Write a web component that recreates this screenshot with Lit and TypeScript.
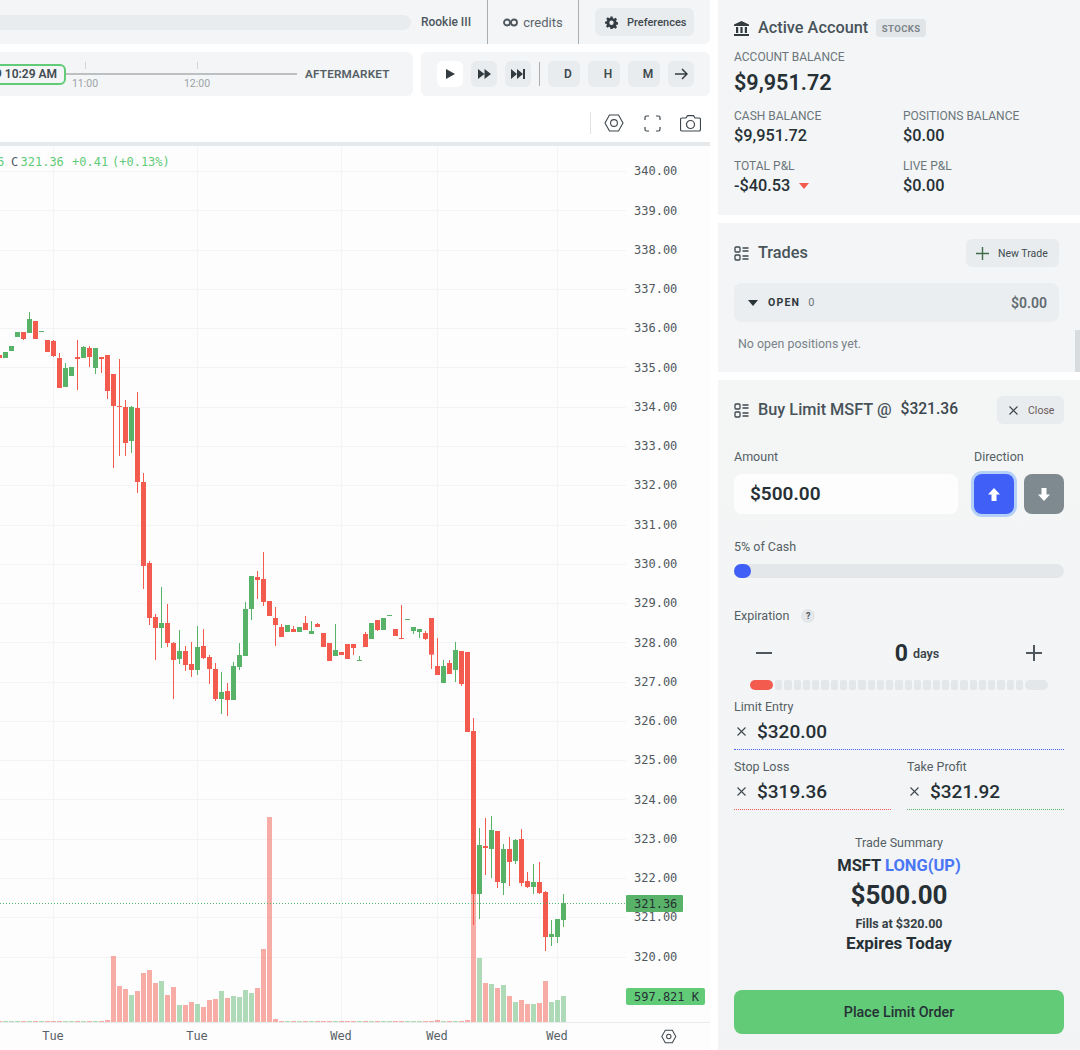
import { LitElement, html, css, svg } from "lit";
import { customElement } from "lit/decorators.js";

type C = [number, "r" | "g", number, number, number?, number?];
const A: C[] = [[-1,"r",165,174],[0,"g",156,174],[1,"g",138,153],[2,"g",96,111],[3,"r",96,117,96,120],[4,"g",57,99,36,99],[5,"r",63,117],[6,"g",93,96],[7,"r",120,156],[8,"r",123,168,120,171],[9,"r",174,264,159,264],[10,"g",204,261,189,261],[11,"g",201,228],[12,"r",171,177,120,270],[13,"g",141,174,138,174],[14,"r",144,171,138,201],[15,"g",144,204,144,222],[16,"r",171,177,171,219],[17,"r",165,273,165,297],[18,"r",222,318,222,504],[19,"r",318,321,177,468],[20,"r",321,429,300,468],[21,"g",321,423,318,459],[22,"r",324,546,276,579],[23,"r",546,798,519,867],[24,"r",789,954,783,975],[25,"r",951,984,942,1080],[26,"g",969,984,861,1044],[27,"r",969,1029,912,1041],[28,"r",1029,1080,1026,1197],[29,"g",1053,1077,990,1092],[30,"r",1053,1095,1038,1113],[31,"r",1092,1110,1026,1131],[32,"g",1041,1110,978,1125],[33,"r",1038,1074,987,1077],[34,"r",1071,1107,1065,1152],[35,"r",1107,1197,1089,1203],[36,"g",1176,1197,1116,1242],[37,"r",1173,1200,1149,1248],[38,"g",1098,1200,1086,1200],[39,"g",1065,1101,1029,1110],[40,"g",927,1068,906,1068],[41,"g",828,927,828,960],[42,"r",831,840,813,897],[43,"r",837,906,756,918]];
const B: C[] = [[44,"r",183,228],[45,"r",234,255,201,318],[46,"r",261,291,252,291],[47,"g",255,276],[48,"r",267,276,258,276],[49,"g",261,276],[50,"r",249,270,228,270],[51,"g",273,282,243,282],[52,"r",252,261,249,261],[53,"r",279,321],[54,"r",309,363],[55,"g",330,348,252,348],[56,"r",336,345],[57,"r",312,357],[58,"r",312,324,312,345],[59,"g",360,363,348,363],[60,"r",282,321,276,321],[61,"g",249,297],[62,"r",240,270,240,273],[63,"g",234,270],[64,"g",225,228],[65,"r",267,288],[66,"r",294,297,195,297],[67,"g",237,240],[68,"g",261,273,261,282],[69,"g",267,276,267,294],[70,"r",279,297,273,300]];
const D: C[] = [[71,"r",-66,44,-66,87],[72,"r",78,105,-6,105],[73,"g",78,129,60,129],[74,"r",69,102,60,102],[75,"g",30,90,6,126],[76,"r",33,132,33,138],[77,"r",36,276],[78,"r",273,762,234,855],[79,"g",615,762,564,837],[80,"r",618,624,534,705],[81,"g",570,627,528,714],[82,"r",573,726,573,744],[83,"g",627,729,612,765],[84,"r",627,666,591,738],[85,"g",600,663,597,672],[86,"r",597,729,567,738],[87,"r",723,741,696,744],[88,"g",726,741,672,762],[89,"r",726,759,666,762],[90,"r",756,891,753,933],[91,"g",882,891,840,918],[92,"g",837,891,837,909],[93,"g",789,840,762,861]];

const CHART_TOP = 146;
const shift = (list: C[], origin: number) =>
  list.map(([k, c, t, b, wt, wb]) => ({
    k, c,
    t: origin + t / 3, b: origin + b / 3,
    wt: origin + (wt ?? t) / 3, wb: origin + (wb ?? b) / 3,
  }));
const candles = [...shift(A, 300), ...shift(B, 540), ...shift(D, 640)];
const colorOf = new Map(candles.map((c) => [c.k, c.c]));

const volTop: Record<number, number> = {
  17: 1020, 18: 956, 19: 986, 20: 989, 21: 995, 22: 991, 23: 973, 24: 970, 25: 983, 26: 981, 27: 995, 28: 987,
  29: 1005, 30: 1005, 31: 1002, 32: 1004, 33: 1007, 34: 1000, 35: 999, 36: 991, 37: 998, 38: 996, 39: 997, 40: 990,
  41: 993, 42: 988, 43: 949, 44: 817, 45: 1019, 72: 1020, 77: 1020, 78: 894, 79: 958, 80: 983, 81: 984, 82: 988,
  83: 985, 84: 996, 85: 1002, 86: 1000, 87: 1004, 88: 1004, 89: 1003, 90: 981, 91: 1002, 92: 1000, 93: 996,
};
const RED = "#f45b4f", GREEN = "#58b368";
const gridY = (p: number) => 171.6 + (340 - p) * 39.27;
const prices = Array.from({ length: 21 }, (_, i) => 340 - i);
const verticals = [53, 197, 341, 437, 557];
const xLabels: [number, string][] = [[53, "Tue"], [197, "Tue"], [341, "Wed"], [437, "Wed"], [557, "Wed"]];

const hex = () => html`<svg width="20" height="18" viewBox="0 0 20 18" fill="none" stroke="#3d464c" stroke-width="1.1"><path d="M5.5 1h9L19 9l-4.5 8h-9L1 9z"/><circle cx="10" cy="9" r="3.4"/></svg>`;
const listIc = html`<svg width="15" height="15" viewBox="0 0 15 15" fill="none" stroke="#3d474d" stroke-width="1.3"><rect x="1" y="1" width="5" height="5" rx="1"/><rect x="1" y="9" width="5" height="5" rx="1"/><path d="M8.5 2h6M8.5 5h6M8.5 10h6M8.5 13h6"/></svg>`;
const xIc = html`<svg width="9" height="9" viewBox="0 0 9 9" stroke="#3d474d" stroke-width="1.1"><path d="M.5.5l8 8M8.5.5l-8 8"/></svg>`;

@customElement("app-root")
export class AppRoot extends LitElement {
  static styles = css`
    :host { display: block; width: 1080px; height: 1050px; overflow: hidden; background: #fff; font-family: "Roboto", "Liberation Sans", sans-serif; color: #2a3338; }
    .page { display: grid; grid-template-columns: 710px 362px; gap: 8px; height: 1050px; }
    .left { display: flex; flex-direction: column; min-width: 0; overflow: hidden; background: #fff; }
    .top { display: flex; align-items: center; height: 44px; background: #f3f5f6; border-radius: 0 0 6px 0; flex: none; }
    .prog { flex: 1; height: 15px; margin-left: -20px; background: #e9ecee; border-radius: 8px; }
    .rank { width: 76px; box-sizing: border-box; padding-right: 6px; text-align: center; font-size: 12px; font-weight: 500; color: #4d575d; white-space: nowrap; }
    .cell { height: 44px; border-left: 1px solid #a9aeb1; display: flex; align-items: center; justify-content: center; box-sizing: border-box; }
    .credits { width: 91px; gap: 5px; font-size: 13px; color: #5a646a; }
    .prefcell { width: 132px; padding-left: 16px; justify-content: flex-start; }
    .pref { width: 99px; height: 28px; background: #e9ecee; border-radius: 6px; display: flex; align-items: center; gap: 9px; padding-left: 10px; box-sizing: border-box; font-size: 11px; font-weight: 500; color: #3f484e; white-space: nowrap; }
    .row2 { display: flex; gap: 8px; margin-top: 8px; height: 44px; flex: none; }
    .tl { width: 413px; background: #f3f5f6; border-radius: 0 6px 6px 0; display: flex; align-items: center; }
    .pill { margin-left: -30px; width: 96px; height: 21px; box-sizing: border-box; border: 2px solid #62cb78; border-radius: 6px; display: flex; align-items: center; justify-content: flex-end; padding-right: 7px; font-size: 12px; font-weight: 600; color: #414b51; white-space: nowrap; flex: none; overflow: hidden; }
    .line { position: relative; flex: none; width: 231px; height: 2px; background: #bcc0c3; }
    .tick { position: absolute; top: -11px; width: 1px; height: 7px; background: #cfd3d5; }
    .tlab { position: absolute; top: 4px; transform: translateX(-50%); font-size: 10.5px; color: #9da3a7; }
    .after { margin-left: 8px; font-size: 11.7px; font-weight: 600; color: #555f65; letter-spacing: .2px; white-space: nowrap; }
    .ctl { flex: 1; background: #f3f5f6; border-radius: 6px; display: flex; align-items: center; padding-left: 16px; gap: 8px; }
    .btn { width: 26px; height: 26px; border-radius: 6px; background: #e9ecee; display: flex; align-items: center; justify-content: center; font-size: 12px; font-weight: 600; color: #3f484e; }
    .btn.white { background: #fff; }
    .btn.w { width: 32px; box-sizing: border-box; padding-left: 8px; }
    .sep { width: 1px; height: 24px; background: #a9aeb1; }
    .tools { height: 46px; flex: none; display: flex; align-items: center; justify-content: flex-end; padding-right: 9px; padding-top: 8px; box-sizing: border-box; }
    .vsep { width: 1px; height: 22px; background: #dfe2e4; margin-right: 13px; }
    .t1 { margin-right: 20px; display: flex; }
    .t2 { margin-right: 19px; display: flex; }
    .band { height: 4px; background: #e6e9ec; flex: none; }
    .chart { display: block; flex: none; background: #fdfdfd; }
    .chart text { font-family: "DejaVu Sans Mono", monospace; font-size: 12px; }
    .right { display: flex; flex-direction: column; gap: 8px; position: relative; min-width: 0; }
    .card { background: #f3f5f6; box-sizing: border-box; padding: 0 16px; flex: none; }
    .acct { height: 215px; padding-top: 18px; }
    .trades { height: 149px; padding-top: 16px; }
    .form { flex: 1; padding-top: 16px; background: linear-gradient(#f4f6f6, #f1f3f5); }
    .scroll { position: absolute; right: 0; top: 330px; width: 5px; height: 42px; background: #d9dcde; }
    .head { display: flex; align-items: center; height: 20px; }
    .head > svg { flex: none; margin-right: 9px; }
    .title { font-size: 16.3px; font-weight: 500; color: #48535a; padding-bottom: 2px; white-space: nowrap; }
    .tag { margin-left: 8px; width: 50px; height: 18px; background: #e2e5e8; border-radius: 4px; font-size: 9.5px; font-weight: 700; letter-spacing: .4px; color: #7b848a; display: flex; align-items: center; justify-content: center; }
    .lbl { font-size: 12px; color: #6c757b; line-height: 16px; }
    .big { font-size: 21.6px; font-weight: 600; line-height: 30px; color: #263035; margin-top: 3px; }
    .grid2 { display: grid; grid-template-columns: 169px 1fr; row-gap: 10px; margin-top: 10px; }
    .val { font-size: 16.3px; font-weight: 500; line-height: 24px; color: #263035; display: flex; align-items: center; gap: 9px; }
    .down { width: 0; height: 0; border: 5px solid transparent; border-top: 6px solid #f45b4f; border-bottom: 0; }
    .between { justify-content: space-between; }
    .action { height: 28px; background: #e9ecee; border-radius: 6px; display: flex; align-items: center; font-size: 10.5px; box-sizing: border-box; color: #414b51; white-space: nowrap; }
    .newt { width: 93px; padding-left: 10px; gap: 9px; margin-right: 5px; }
    .closeb { width: 67px; padding-left: 12px; gap: 10px; color: #6b5a5c; }
    .open { margin-top: 16px; height: 39px; background: #ebeef0; border-radius: 8px; display: flex; align-items: center; padding: 0 12px 0 14px; font-size: 10.5px; color: #2f383d; }
    .caret { width: 0; height: 0; border: 5px solid transparent; border-top: 6px solid #2a3338; border-bottom: 0; margin-right: 10px; }
    .ob { font-weight: 700; letter-spacing: 1.2px; }
    .oc { margin-left: 8px; color: #6c757b; font-size: 11px; }
    .oamt { margin-left: auto; font-size: 14px; font-weight: 600; color: #626c72; }
    .none { margin: 14px 0 0 4px; font-size: 12.4px; color: #7a8389; }
    .price { margin-left: 9px; color: #3d474d; font-size: 15.6px; }
    .f-lbl { font-size: 12.5px; line-height: 16px; color: #555f65; }
    .amtrow { display: grid; grid-template-columns: 240px 1fr; margin-top: 25px; }
    .input { margin-top: 9px; width: 224px; height: 40px; box-sizing: border-box; background: #fdfdfd; border-radius: 8px; padding: 0 0 2px 16px; display: flex; align-items: center; font-size: 19px; font-weight: 600; color: #263035; }
    .dirs { margin-top: 9px; display: flex; gap: 10px; }
    .dir { width: 40px; height: 40px; border-radius: 8px; background: #7f8a90; display: flex; align-items: center; justify-content: center; }
    .dir.on { background: #3f5ff7; box-shadow: 0 0 0 3px #b4d0f7; }
    .pct { margin-top: 25px; }
    .slider { margin-top: 9px; height: 14px; border-radius: 7px; background: #e4e7ea; }
    .knob { width: 17px; height: 14px; border-radius: 7px; background: #3f5ff7; }
    .exp { margin-top: 30px; display: flex; align-items: center; gap: 12px; }
    .q { width: 14px; height: 14px; border-radius: 50%; background: #e4e7ea; font-size: 9px; font-weight: 700; color: #4d575d; display: flex; align-items: center; justify-content: center; }
    .days { margin-top: 17px; height: 24px; display: flex; align-items: center; justify-content: space-between; padding: 0 22px; }
    .dnum { display: flex; align-items: center; gap: 5px; font-size: 12.5px; font-weight: 600; color: #3a4349; margin-left: 36px; }
    .dnum b { font-size: 23px; font-weight: 700; color: #263035; }
    .steps { margin: 15px 16px 0; height: 10px; display: flex; gap: 2px; }
    .s { flex: 1; background: #e4e7ea; border-radius: 2px; }
    .s.first { flex: none; width: 23px; background: #f45b4f; border-radius: 5px; }
    .s.last { flex: none; width: 23px; border-radius: 5px; }
    .field { margin-top: 9px; }
    .fv { height: 35px; box-sizing: border-box; display: flex; align-items: center; gap: 11px; padding: 0 0 1px 3px; font-size: 19px; font-weight: 500; color: #263035; border-bottom: 1px dotted; }
    .blue { border-color: #3f5ff7; }
    .red { border-color: #f45b4f; }
    .green { border-color: #58b368; }
    .fields2 { display: grid; grid-template-columns: 157px 157px; justify-content: space-between; }
    .sum { margin-top: 25px; display: flex; flex-direction: column; align-items: center; color: #263035; }
    .s1 { font-size: 12.5px; line-height: 16px; color: #555f65; }
    .s2 { font-size: 16.5px; line-height: 20px; font-weight: 700; margin-top: 5px; }
    .s2 span { color: #4a76f5; }
    .s3 { font-size: 26px; line-height: 30px; font-weight: 700; margin-top: 4px; }
    .s4 { font-size: 12.5px; line-height: 16px; font-weight: 700; margin-top: 6px; color: #363f44; }
    .s5 { font-size: 17px; line-height: 20px; font-weight: 700; margin-top: 1px; }
    .place { margin-top: 37px; height: 44px; border-radius: 8px; background: #62cb78; display: flex; align-items: center; justify-content: center; font-size: 14.3px; font-weight: 500; color: #263035; }
  `;

  private chart() {
    const T = CHART_TOP;
    return html`<svg class="chart" width="710" height="904" viewBox="0 ${T} 710 904">
      ${prices.map((p) => svg`<rect x="0" y=${Math.floor(gridY(p))} width="626" height="1" fill="#f3f4f5"/>`)}
      ${verticals.map((x) => svg`<rect x=${x} y=${T} width="1" height=${1022 - T} fill="#f3f4f5"/>`)}
      ${Array.from({ length: 95 }, (_, i) => {
        const k = i - 1;
        const top = volTop[k] ?? 1021;
        const c = colorOf.get(k) ?? "r";
        return svg`<rect x=${3 + 6 * k} y=${top} width="5" height=${1022 - top} fill=${c === "r" ? RED : GREEN} opacity=${c === "r" ? 0.5 : 0.47}/>`;
      })}
      ${candles.map((c) => {
        const col = c.c === "r" ? RED : GREEN;
        return svg`<rect x=${5 + 6 * c.k} y=${c.wt} width="1" height=${c.wb - c.wt} fill=${col}/>
          <rect x=${3 + 6 * c.k} y=${c.t} width="5" height=${c.b - c.t} fill=${col}/>`;
      })}
      <line x1="0" x2="626" y1="903.5" y2="903.5" stroke=${GREEN} stroke-dasharray="1 2"/>
      <rect x="0" y="1022" width="710" height="1" fill="#e8ebee"/>
      ${prices.map((p) => svg`<text x="634" y=${gridY(p) + 3.7} fill="#50585e">${p.toFixed(2)}</text>`)}
      <rect x="626" y="895" width="57" height="17" rx="1" fill=${GREEN}/>
      <text x="634" y="907.5" fill="#263035">321.36</text>
      <rect x="626" y="988" width="79" height="17" rx="2" fill="#62cb78"/>
      <text x="634" y="1000.5" fill="#263035">597.821 K</text>
      ${xLabels.map(([x, t]) => svg`<text x=${x} y="1040" text-anchor="middle" fill="#596167">${t}</text>`)}
      <text x="-3" y="166" fill="#62cb78">6</text>
      <text x="11" y="166" fill="#50585e">C</text>
      <text x="20.5" y="166" fill="#62cb78">321.36</text>
      <text x="72" y="166" fill="#62cb78">+0.41</text>
      <text x="112" y="166" fill="#62cb78">(+0.13%)</text>
      <g transform="translate(661 1029.5) scale(.78)" fill="none" stroke="#3d464c" stroke-width="1.3">
        <path d="M5.5 1h9L19 9l-4.5 8h-9L1 9z"/><circle cx="10" cy="9" r="2.8"/>
      </g>
    </svg>`;
  }

  render() {
    const segs = Array.from({ length: 27 });
    return html`<div class="page">
      <div class="left">
        <div class="top">
          <div class="prog"></div>
          <div class="rank">Rookie III</div>
          <div class="cell credits">
            <svg width="15" height="9" viewBox="0 0 15 9" fill="none" stroke="#4d575d" stroke-width="1.8"><circle cx="4" cy="4.5" r="3"/><circle cx="11" cy="4.5" r="3"/></svg>
            <span>credits</span>
          </div>
          <div class="cell prefcell">
            <div class="pref">
              <svg width="13" height="13" viewBox="0 0 24 24" fill="#333c42"><path fill-rule="evenodd" d="M10 1h4l.6 3.200 2 .9L19.400 3.300l2.800 2.800-1.800 2.800.9 2 3.200.6v4l-3.200.6-.9 2 1.800 2.800-2.800 2.800-2.800-1.800-2 .9L14 24h-4l-.6-3.200-2-.9-2.800 1.800-2.800-2.800 1.800-2.800-.9-2L0 14.500v-4l3.200-.6.9-2L2.300 5.100 5.100 2.300l2.800 1.800 2-.9zM12 8.500a4 4 0 1 0 0 8 4 4 0 0 0 0-8z"/></svg>
              <span>Preferences</span>
            </div>
          </div>
        </div>
        <div class="row2">
          <div class="tl">
            <div class="pill">9 10:29 AM</div>
            <div class="line">
              <div class="tick" style="left:19px"></div>
              <div class="tick" style="left:131px"></div>
              <div class="tlab" style="left:19px">11:00</div>
              <div class="tlab" style="left:131px">12:00</div>
            </div>
            <div class="after">AFTERMARKET</div>
          </div>
          <div class="ctl">
            <div class="btn white"><svg width="9" height="10" viewBox="0 0 9 10" fill="#323b40"><path d="M0 0l9 5-9 5z"/></svg></div>
            <div class="btn"><svg width="13" height="10" viewBox="0 0 13 10" fill="#323b40"><path d="M0 0l6.500 5L0 10zM6.500 0L13 5l-6.500 5z"/></svg></div>
            <div class="btn"><svg width="14" height="10" viewBox="0 0 14 10" fill="#323b40"><path d="M0 0l6 5-6 5zM6 0l6 5-6 5zM12 0h2v10h-2z"/></svg></div>
            <div class="sep"></div>
            <div class="btn w">D</div>
            <div class="btn w">H</div>
            <div class="btn w">M</div>
            <div class="btn"><svg width="13" height="12" viewBox="0 0 13 12" fill="none" stroke="#323b40" stroke-width="1.5"><path d="M0 6h12M7 1l5 5-5 5"/></svg></div>
          </div>
        </div>
        <div class="tools">
          <div class="vsep"></div>
          <div class="t1">${hex()}</div>
          <div class="t2"><svg width="17" height="17" viewBox="0 0 17 17" fill="none" stroke="#3d464c" stroke-width="1.2"><path d="M1 5V2.500A1.500 1.500 0 0 1 2.500 1H5M12 1h2.500A1.500 1.500 0 0 1 16 2.500V5M16 12v2.500a1.500 1.500 0 0 1-1.500 1.500H12M5 16H2.500A1.500 1.500 0 0 1 1 14.500V12"/></svg></div>
          <svg width="21" height="17" viewBox="0 0 21 17" fill="none" stroke="#3d464c" stroke-width="1.2"><path d="M2 3h4l1.500-2.300h6L15 3h4a1.500 1.500 0 0 1 1.500 1.500v10A1.500 1.500 0 0 1 19 16H2a1.500 1.500 0 0 1-1.500-1.500v-10A1.500 1.500 0 0 1 2 3z"/><circle cx="10.5" cy="9.5" r="4"/></svg>
        </div>
        <div class="band"></div>
        ${this.chart()}
      </div>
      <div class="right">
        <div class="card acct">
          <div class="head">
            <svg width="15" height="15" viewBox="0 0 15 15" fill="#323b40"><path d="M7.500 0L15 3.500V5H0V3.500zM2 6h2.200v6H2zM6.400 6h2.200v6H6.400zM10.800 6H13v6h-2.200zM0 13h15v2H0z"/></svg>
            <span class="title">Active Account</span>
            <span class="tag">STOCKS</span>
          </div>
          <div class="lbl" style="margin-top:11px">ACCOUNT BALANCE</div>
          <div class="big">$9,951.72</div>
          <div class="grid2">
            <div><div class="lbl">CASH BALANCE</div><div class="val">$9,951.72</div></div>
            <div><div class="lbl">POSITIONS BALANCE</div><div class="val">$0.00</div></div>
            <div><div class="lbl">TOTAL P&L</div><div class="val">-$40.53 <span class="down"></span></div></div>
            <div><div class="lbl">LIVE P&L</div><div class="val">$0.00</div></div>
          </div>
        </div>
        <div class="card trades">
          <div class="head between" style="height:28px">
            <div class="head">${listIc}<span class="title">Trades</span></div>
            <div class="action newt">
              <svg width="13" height="13" viewBox="0 0 13 13" stroke="#3f6b4c" stroke-width="1.4"><path d="M6.500 0v13M0 6.500h13"/></svg>
              <span>New Trade</span>
            </div>
          </div>
          <div class="open" style="margin-right:5px">
            <span class="caret"></span><span class="ob">OPEN</span><span class="oc">0</span><span class="oamt">$0.00</span>
          </div>
          <div class="none">No open positions yet.</div>
        </div>
        <div class="card form">
          <div class="head between" style="height:28px">
            <div class="head">${listIc}<span class="title">Buy Limit MSFT @</span><span class="title price">$321.36</span></div>
            <div class="action closeb">${xIc}<span>Close</span></div>
          </div>
          <div class="amtrow">
            <div><div class="f-lbl">Amount</div><div class="input">$500.00</div></div>
            <div>
              <div class="f-lbl">Direction</div>
              <div class="dirs">
                <div class="dir on"><svg width="12" height="13" viewBox="0 0 12 13" fill="#fff"><path d="M6 0l6 6.500H8.500V13h-5V6.500H0z"/></svg></div>
                <div class="dir"><svg width="12" height="13" viewBox="0 0 12 13" fill="#fff"><path d="M6 13L0 6.500h3.500V0h5v6.500H12z"/></svg></div>
              </div>
            </div>
          </div>
          <div class="f-lbl pct">5% of Cash</div>
          <div class="slider"><div class="knob"></div></div>
          <div class="exp"><span class="f-lbl">Expiration</span><span class="q">?</span></div>
          <div class="days">
            <svg width="16" height="2" viewBox="0 0 16 2" fill="#4d575d"><rect width="16" height="2"/></svg>
            <div class="dnum"><b>0</b><span>days</span></div>
            <svg width="16" height="16" viewBox="0 0 16 16" stroke="#4d575d" stroke-width="2"><path d="M8 0v16M0 8h16"/></svg>
          </div>
          <div class="steps">
            <div class="s first"></div>
            ${segs.map(() => html`<div class="s"></div>`)}
            <div class="s last"></div>
          </div>
          <div class="field">
            <div class="f-lbl">Limit Entry</div>
            <div class="fv blue">${xIc}<span>$320.00</span></div>
          </div>
          <div class="fields2">
            <div class="field"><div class="f-lbl">Stop Loss</div><div class="fv red">${xIc}<span>$319.36</span></div></div>
            <div class="field"><div class="f-lbl">Take Profit</div><div class="fv green">${xIc}<span>$321.92</span></div></div>
          </div>
          <div class="sum">
            <div class="s1">Trade Summary</div>
            <div class="s2">MSFT <span>LONG(UP)</span></div>
            <div class="s3">$500.00</div>
            <div class="s4">Fills at $320.00</div>
            <div class="s5">Expires Today</div>
          </div>
          <div class="place">Place Limit Order</div>
        </div>
        <div class="scroll"></div>
      </div>
    </div>`;
  }
}
